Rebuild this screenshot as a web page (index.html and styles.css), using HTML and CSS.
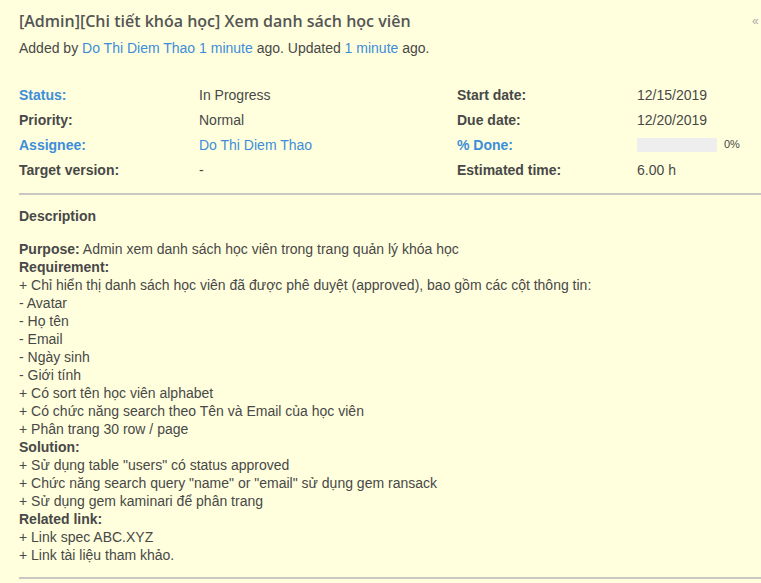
FILE: index.html
```html
<!DOCTYPE html>
<html>
<head>
<meta charset="utf-8">
<link rel="stylesheet" href="styles.css">
</head>
<body>
<div class="issue">
  <a class="toggle">«</a>
  <h3 class="subject">[Admin][Chi tiết khóa học] Xem danh sách học viên</h3>
  <p class="author">Added by <a href="#">Do Thi Diem Thao</a> <a href="#">1 minute</a> ago. Updated <a href="#">1 minute</a> ago.</p>
  <div class="attributes">
    <div class="col">
      <div class="row"><span class="label link">Status:</span><span class="value">In Progress</span></div>
      <div class="row"><span class="label">Priority:</span><span class="value">Normal</span></div>
      <div class="row"><span class="label link">Assignee:</span><span class="value link">Do Thi Diem Thao</span></div>
      <div class="row"><span class="label">Target version:</span><span class="value">-</span></div>
    </div>
    <div class="col">
      <div class="row"><span class="label">Start date:</span><span class="value">12/15/2019</span></div>
      <div class="row"><span class="label">Due date:</span><span class="value">12/20/2019</span></div>
      <div class="row"><span class="label link">% Done:</span><span class="value progress"><span class="bar"></span><span class="pct">0%</span></span></div>
      <div class="row"><span class="label">Estimated time:</span><span class="value">6.00 h</span></div>
    </div>
  </div>
  <hr class="sep">
  <div class="description">
    <p class="dtitle">Description</p>
    <div class="wiki">
      <b>Purpose:</b> Admin xem danh sách học viên trong trang quản lý khóa học<br>
      <b>Requirement:</b><br>
      + Chỉ hiển thị danh sách học viên đã được phê duyệt (approved), bao gồm các cột thông tin:<br>
      - Avatar<br>
      - Họ tên<br>
      - Email<br>
      - Ngày sinh<br>
      - Giới tính<br>
      + Có sort tên học viên alphabet<br>
      + Có chức năng search theo Tên và Email của học viên<br>
      + Phân trang 30 row / page<br>
      <b>Solution:</b><br>
      + Sử dụng table "users" có status approved<br>
      + Chức năng search query "name" or "email" sử dụng gem ransack<br>
      + Sử dụng gem kaminari để phân trang<br>
      <b>Related link:</b><br>
      + Link spec ABC.XYZ<br>
      + Link tài liệu tham khảo.
    </div>
  </div>
  <hr class="sep bottom">
</div>
</body>
</html>
```
FILE: styles.css
```css
html, body {
  margin: 0;
  padding: 0;
  background: #ffffdd;
}
body {
  font-family: "Liberation Sans", Arial, sans-serif;
  font-size: 14px;
  color: #484848;
  overflow: hidden;
}
a {
  color: #3d8ddb;
  text-decoration: none;
}
.issue {
  position: relative;
  padding: 10px 0 0 19px;
  width: 780px;
}
.toggle {
  position: absolute;
  top: 14px;
  left: 752px;
  font-size: 12px;
  color: #aaa;
}
.subject {
  margin: 0;
  font-family: "Open Sans", sans-serif;
  font-weight: 600;
  font-size: 16px;
  color: #555;
  line-height: 22px;
}
.author {
  margin: 6px 0 0;
  line-height: 20px;
}
.attributes {
  display: grid;
  grid-template-columns: 438px 300px;
  margin-top: 24px;
}
.row {
  display: flex;
  height: 25px;
  align-items: center;
}
.label {
  width: 180px;
  font-weight: bold;
}
.link {
  color: #3d8ddb;
}
.progress {
  display: flex;
  align-items: center;
}
.bar {
  display: inline-block;
  width: 80px;
  height: 14px;
  background: #eeeeee;
}
.pct {
  font-size: 11px;
  margin-left: 7px;
  margin-top: -2px;
}
.sep {
  border: 0;
  border-top: 2px solid #c8c8c0;
  margin: 11px 0 0;
  height: 0;
}
.description {
  padding-top: 12px;
}
.dtitle {
  margin: 0;
  font-weight: bold;
  line-height: 18px;
}
.wiki {
  margin-top: 15px;
  line-height: 18px;
}
.bottom {
  margin-top: 13px;
}
```
